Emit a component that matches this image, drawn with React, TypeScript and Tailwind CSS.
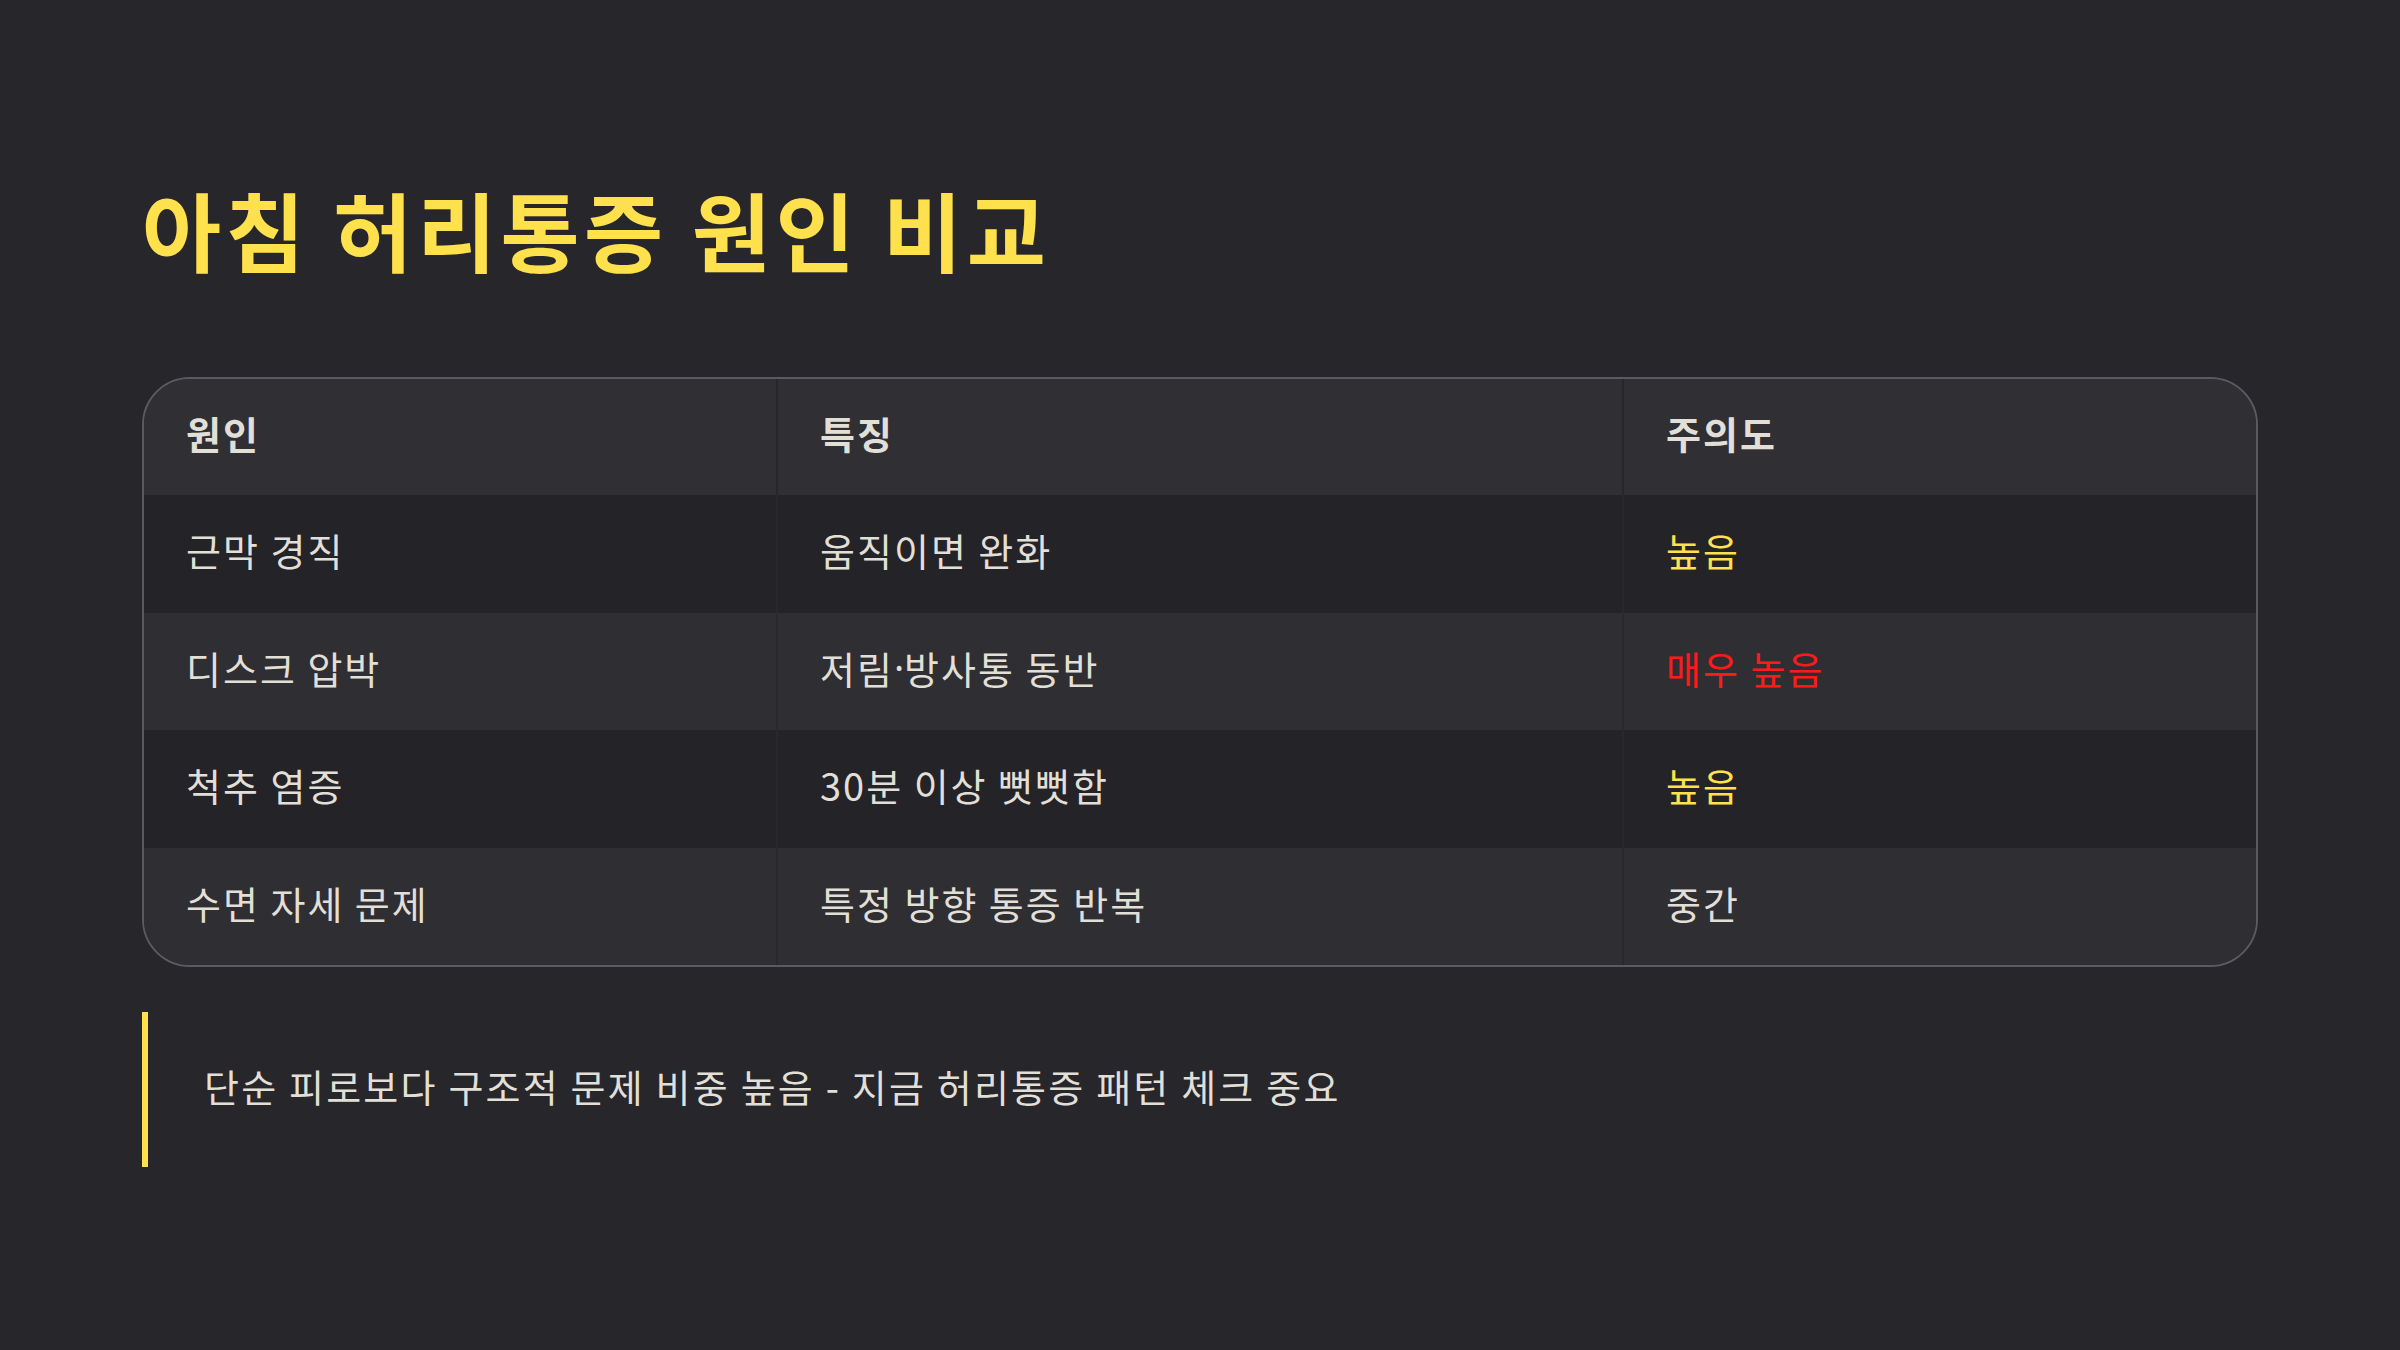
import React from "react";

const rows: { cause: string; feature: React.ReactNode; level: string; tone: "y" | "r" | "n" }[] = [
  { cause: "근막 경직", feature: "움직이면 완화", level: "높음", tone: "y" },
  {
    cause: "디스크 압박",
    feature: (
      <>
        저림<span style={{ fontFamily: '"Noto Sans", sans-serif', letterSpacing: 0 }}>·</span>방사통 동반
      </>
    ),
    level: "매우 높음",
    tone: "r",
  },
  { cause: "척추 염증", feature: "30분 이상 뻣뻣함", level: "높음", tone: "y" },
  { cause: "수면 자세 문제", feature: "특정 방향 통증 반복", level: "중간", tone: "n" },
];

const font = { fontFamily: '"Noto Sans CJK KR", "Noto Sans", sans-serif' };

export default function App() {
  return (
    <div
      className="w-[2400px] h-[1350px] bg-[#26262b] flex flex-col px-[142px] pt-[177px] text-[#e2dfd7]"
      style={font}
    >
      <h1 className="text-[86px] font-bold leading-[1.2] text-[#ffe04d] tracking-[4.5px]">
        아침 허리통증 원인 비교
      </h1>
      <div className="mt-[97px] w-[2116px] rounded-[48px] border-2 border-[#5a5a60] overflow-hidden">
        <div className="grid grid-cols-[634px_846px_1fr] bg-[#2f2f34] h-[116px] text-[38px] font-bold tracking-[2px]">
          <div className="flex items-center pl-[42px] pb-[9px] border-r-2 border-[#26262b]">원인</div>
          <div className="flex items-center pl-[42px] pb-[9px] border-r-2 border-[#26262b]">특징</div>
          <div className="flex items-center pl-[42px] pb-[9px]">주의도</div>
        </div>
        {rows.map((r, i) => (
          <div
            key={i}
            className={
              "grid grid-cols-[634px_846px_1fr] h-[117.5px] text-[38px] tracking-[2px] " +
              (i % 2 === 0 ? "bg-[#232328]" : "bg-[#2e2e33]")
            }
          >
            <div className="flex items-center pl-[42px] pb-[8px] border-r-2 border-[#28282d]">{r.cause}</div>
            <div className="flex items-center pl-[42px] pb-[8px] border-r-2 border-[#28282d]">{r.feature}</div>
            <div
              className={
                "flex items-center pl-[42px] pb-[8px] " +
                (r.tone === "y" ? "text-[#ffe04d]" : r.tone === "r" ? "text-[#ff1a1a]" : "")
              }
            >
              {r.level}
            </div>
          </div>
        ))}
      </div>
      <div className="mt-[45px] flex h-[155px] border-l-[6px] border-[#ffe04d] items-center pl-[56px] pb-[8px] text-[38px] tracking-[2.2px]">
        단순 피로보다 구조적 문제 비중 높음 - 지금 허리통증 패턴 체크 중요
      </div>
    </div>
  );
}
